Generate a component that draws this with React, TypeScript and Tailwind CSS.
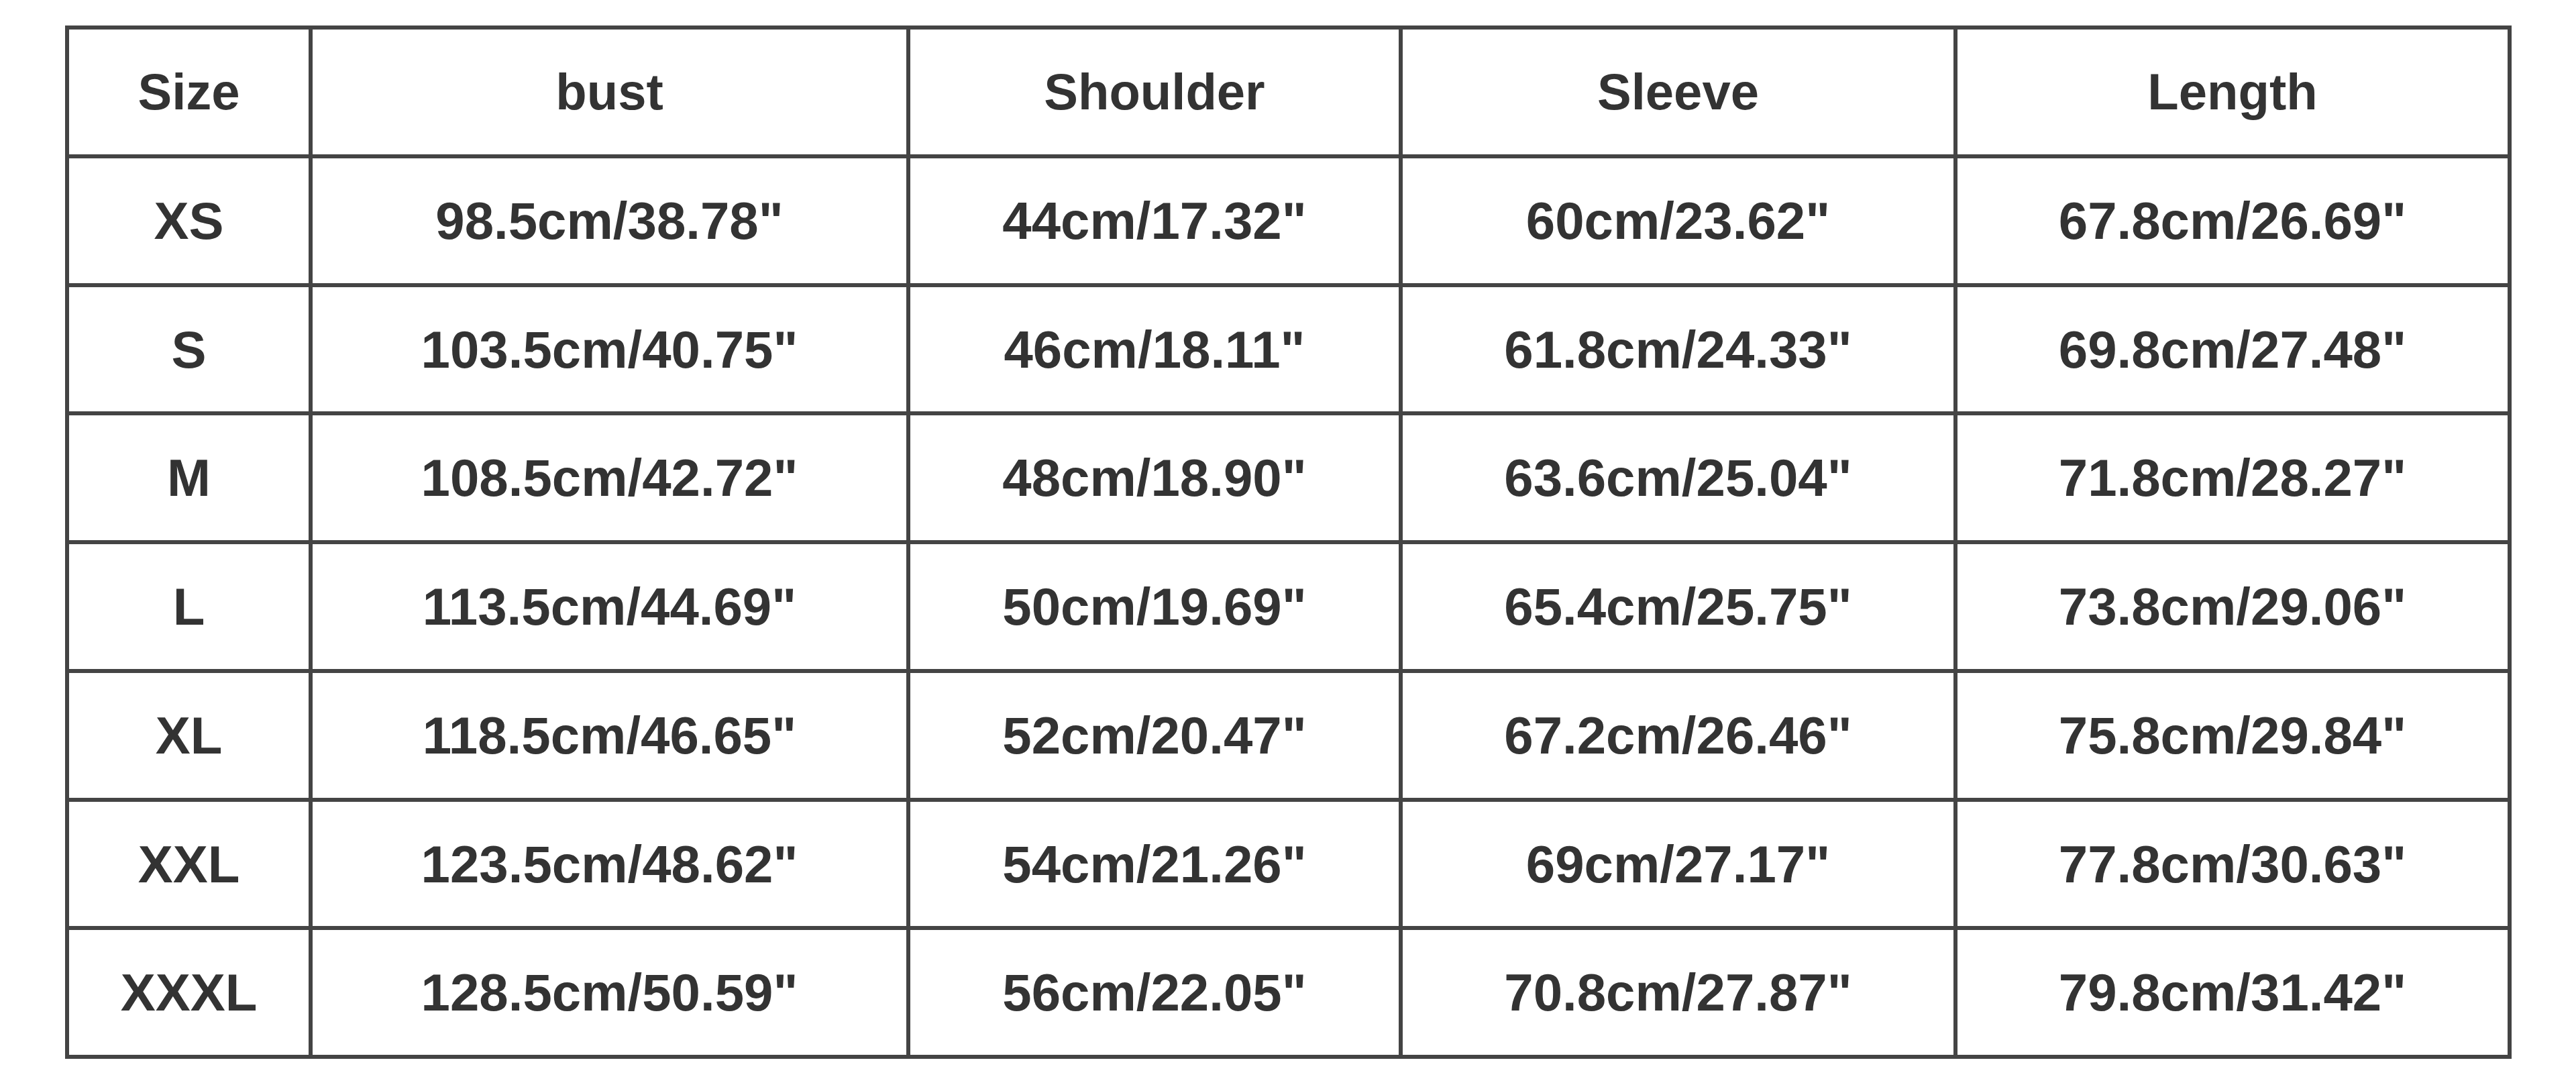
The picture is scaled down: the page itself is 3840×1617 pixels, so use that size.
import React from "react";

const headers = ["Size", "bust", "Shoulder", "Sleeve", "Length"];

const rows: string[][] = [
  ["XS", "98.5cm/38.78\"", "44cm/17.32\"", "60cm/23.62\"", "67.8cm/26.69\""],
  ["S", "103.5cm/40.75\"", "46cm/18.11\"", "61.8cm/24.33\"", "69.8cm/27.48\""],
  ["M", "108.5cm/42.72\"", "48cm/18.90\"", "63.6cm/25.04\"", "71.8cm/28.27\""],
  ["L", "113.5cm/44.69\"", "50cm/19.69\"", "65.4cm/25.75\"", "73.8cm/29.06\""],
  ["XL", "118.5cm/46.65\"", "52cm/20.47\"", "67.2cm/26.46\"", "75.8cm/29.84\""],
  ["XXL", "123.5cm/48.62\"", "54cm/21.26\"", "69cm/27.17\"", "77.8cm/30.63\""],
  ["XXXL", "128.5cm/50.59\"", "56cm/22.05\"", "70.8cm/27.87\"", "79.8cm/31.42\""],
];

export default function App() {
  return (
    <div
      className="w-[3840px] h-[1617px] bg-white pt-[38px] pl-[97px]"
      style={{ fontFamily: '"Liberation Sans", Arial, sans-serif' }}
    >
      <div className="inline-grid grid-cols-[357px_885px_728px_821px_820px] grid-rows-[186px_186px_185px_186px_186px_186px_185px_186px] gap-[6px] p-[6px] bg-[#444444]">
        {headers.map((h) => (
          <div
            key={h}
            className="bg-white flex items-center justify-center font-bold text-[76px] leading-none text-[#333333]"
          >
            {h}
          </div>
        ))}
        {rows.map((r) =>
          r.map((c, i) => (
            <div
              key={r[0] + "-" + i}
              className="bg-white flex items-center justify-center font-bold text-[78px] leading-none text-[#333333]"
            >
              {c}
            </div>
          ))
        )}
      </div>
    </div>
  );
}
